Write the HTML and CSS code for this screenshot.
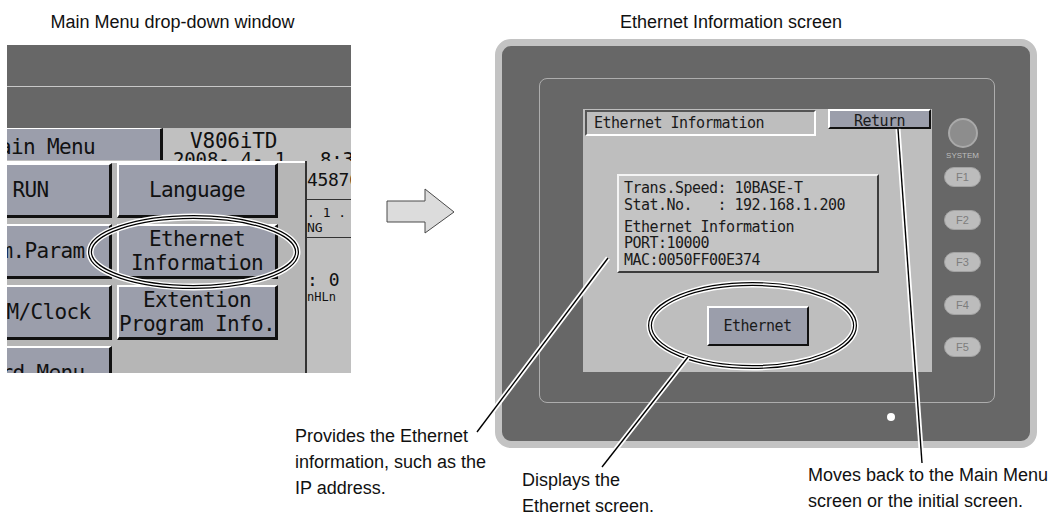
FILE: index.html
```html
<!DOCTYPE html>
<html lang="en">

<head>
    <meta charset="UTF-8">
    <meta name="viewport" content="width=device-width, initial-scale=1.0">
    <title>Ethernet Information</title>

    <link rel="stylesheet" href="styles.css">

</head>

<body>
    <div class="figure">
        <div class="top">
            <!-- Menu principal (ventana desplegable) -->
            <div class="col col-left">
                <div class="caption caption-left">Main Menu drop-down window</div>
                <div class="menu-shot">
                    <div class="menu-head"></div>
                    <div class="menu-screen">
                        <div class="menu-bar">
                            <div class="menu-title">Main Menu</div>
                            <div class="menu-model">
                                <div class="model-name">V806iTD</div>
                                <div class="model-date">2008- 4- 1   8:30</div>
                            </div>
                        </div>
                        <div class="menu-body">
                            <div class="menu-grid">
                                <div class="mbtn">RUN</div>
                                <div class="mbtn">Language</div>
                                <div class="mbtn">Comm.Param.</div>
                                <div class="mbtn">Ethernet<br>Information</div>
                                <div class="mbtn">SRAM/Clock</div>
                                <div class="mbtn">Extention<br>Program Info.</div>
                                <div class="mbtn">Card Menu</div>
                            </div>
                            <div class="menu-status">
                                <div class="st-count">45870</div>
                                <div class="st-ip"><span class="ln">. 1 .</span><span class="ln">NG</span></div>
                                <div class="st-clock">: 0</div>
                                <div class="st-small">nHLn</div>
                            </div>
                        </div>
                    </div>
                </div>
            </div>

            <!-- Flecha -->
            <svg class="arrow" width="70" height="46" viewBox="0 0 70 46">
                <polygon points="1,13 39,13 39,1 68,24 39,45 39,34 1,34" fill="#dcdcdc" stroke="#4a4a4a" stroke-width="1"/>
            </svg>

            <!-- Pantalla de informacion Ethernet -->
            <div class="col col-right">
                <div class="caption caption-right">Ethernet Information screen</div>
                <div class="device">
                    <div class="bezel">
                        <div class="screen">
                            <div class="scr-top">
                                <div class="scr-title">Ethernet Information</div>
                                <div class="scr-return">Return</div>
                            </div>
                            <div class="scr-info">
                                <div class="ln">Trans.Speed: 10BASE-T</div>
                                <div class="ln">Stat.No.   : 192.168.1.200</div>
                                <div class="ln info-gap">Ethernet Information</div>
                                <div class="ln">PORT:10000</div>
                                <div class="ln">MAC:0050FF00E374</div>
                            </div>
                            <div class="scr-btn">Ethernet</div>
                        </div>
                        <div class="keys">
                            <div class="sys"></div>
                            <div class="sys-label">SYSTEM</div>
                            <div class="fkey fkey-first">F1</div>
                            <div class="fkey">F2</div>
                            <div class="fkey">F3</div>
                            <div class="fkey">F4</div>
                            <div class="fkey">F5</div>
                        </div>
                    </div>
                    <div class="dot"></div>
                </div>
            </div>
        </div>

        <!-- Llamadas (elipses y lineas) -->
        <svg class="callouts" width="1063" height="515" viewBox="0 0 1063 515">
            <g fill="none">
                <ellipse cx="193.5" cy="252" rx="103.5" ry="35" stroke="#fff" stroke-width="7"/>
                <ellipse cx="193.5" cy="252" rx="103.5" ry="35" stroke="#000" stroke-width="4"/>
                <ellipse cx="193.5" cy="252" rx="103.5" ry="35" stroke="#fff" stroke-width="1.6"/>

                <ellipse cx="752.5" cy="325.5" rx="102.5" ry="41.5" stroke="#fff" stroke-width="7"/>
                <ellipse cx="752.5" cy="325.5" rx="102.5" ry="41.5" stroke="#000" stroke-width="4"/>
                <ellipse cx="752.5" cy="325.5" rx="102.5" ry="41.5" stroke="#fff" stroke-width="1.6"/>

                <line x1="608" y1="258" x2="477" y2="432" stroke="#fff" stroke-width="5"/>
                <line x1="608" y1="258" x2="477" y2="432" stroke="#000" stroke-width="1.4"/>
                <line x1="688" y1="357" x2="602" y2="467" stroke="#fff" stroke-width="5"/>
                <line x1="688" y1="357" x2="602" y2="467" stroke="#000" stroke-width="1.4"/>
                <line x1="898" y1="129" x2="922" y2="463" stroke="#fff" stroke-width="5"/>
                <line x1="898" y1="129" x2="922" y2="463" stroke="#000" stroke-width="1.4"/>
            </g>
        </svg>

        <div class="note note-ip">Provides the Ethernet<br>information, such as the<br>IP address.</div>
        <div class="note note-eth">Displays the<br>Ethernet screen.</div>
        <div class="note note-ret">Moves back to the Main Menu<br>screen or the initial screen.</div>
    </div>
</body>

</html>
```

FILE: styles.css
```css
body {
    margin: 0;
    font-family: "Liberation Sans", Arial, sans-serif;
    background-color: #fff;
    color: #111;
}

.figure {
    position: relative;
    width: 1063px;
    height: 515px;
    overflow: hidden;
}

.top {
    display: flex;
    align-items: flex-start;
}

.caption {
    font-size: 18px;
    line-height: 20px;
    padding-top: 12px;
    height: 20px;
    text-align: center;
    white-space: nowrap;
}

.caption-left {
    padding-right: 13px;
}

.caption-right {
    padding-right: 70px;
}

.ln {
    display: block;
    white-space: pre;
}

/* ---- menu principal ---- */

.col-left {
    margin-left: 7px;
    width: 344px;
}

.menu-shot {
    margin-top: 13px;
    width: 344px;
    height: 328px;
    overflow: hidden;
    font-family: "DejaVu Sans Mono", monospace;
}

.menu-head {
    height: 83px;
    background: linear-gradient(#676767 41px, #c8c8c8 41px, #c8c8c8 42px, #676767 42px);
}

.menu-screen {
    height: 245px;
    background-color: #c0c0c0;
}

.menu-bar {
    display: flex;
    height: 33px;
    overflow: hidden;
}

.menu-title {
    flex: none;
    box-sizing: border-box;
    margin-left: -57px;
    width: 213px;
    height: 32px;
    padding: 5px 0 0 37px;
    background-color: #9b9eab;
    border-top: 1px solid #fff;
    border-right: 3px solid #111;
    font-size: 21px;
    line-height: 26px;
    letter-spacing: -0.64px;
    white-space: nowrap;
}

.menu-model {
    flex: 1;
    padding: 3px 0 0 27px;
    overflow: hidden;
}

.model-name {
    font-size: 21px;
    line-height: 20px;
    letter-spacing: -0.2px;
    white-space: pre;
}

.model-date {
    margin-left: -17px;
    font-size: 19px;
    line-height: 16px;
    letter-spacing: -0.14px;
    white-space: pre;
}

.menu-body {
    display: flex;
    height: 212px;
}

.menu-grid {
    flex: none;
    margin-left: -57px;
    width: 355px;
    display: grid;
    grid-template-columns: 162px 161px;
    grid-auto-rows: 55px;
    column-gap: 5px;
    row-gap: 6px;
    align-content: start;
    background-color: #b6b6b6;
    border-top: 2px solid #fff;
}

.mbtn {
    box-sizing: border-box;
    display: flex;
    align-items: center;
    justify-content: center;
    text-align: center;
    background-color: #9b9eab;
    border-style: solid;
    border-width: 2px 3px 3px 2px;
    border-color: #fff #111 #111 #fff;
    font-size: 21px;
    line-height: 24px;
    letter-spacing: -0.64px;
    white-space: nowrap;
    overflow: hidden;
}

.menu-status {
    flex: none;
    width: 44px;
    border-left: 2px solid #333;
    background-color: #c0c0c0;
    overflow: hidden;
}

.st-count {
    box-sizing: border-box;
    height: 39px;
    padding-top: 9px;
    border-bottom: 1px solid #333;
    font-size: 18px;
    line-height: 20px;
    letter-spacing: -0.3px;
    white-space: pre;
}

.st-ip {
    box-sizing: border-box;
    height: 38px;
    padding-top: 5px;
    border-bottom: 1px solid #333;
    font-size: 13px;
    line-height: 15px;
}

.st-clock {
    padding-top: 32px;
    font-size: 18px;
    line-height: 20px;
    white-space: pre;
}

.st-small {
    font-size: 12px;
    line-height: 14px;
    white-space: pre;
}

/* ---- flecha ---- */

.arrow {
    flex: none;
    margin: 188px 0 0 35px;
}

/* ---- equipo ---- */

.col-right {
    margin-left: 39px;
    width: 542px;
}

.device {
    box-sizing: border-box;
    margin-top: 7px;
    width: 542px;
    height: 409px;
    border: 7px solid #c3c3c3;
    border-radius: 16px;
    background-color: #676767;
    overflow: hidden;
}

.bezel {
    box-sizing: border-box;
    display: flex;
    margin: 32px 0 0 37px;
    width: 456px;
    height: 325px;
    border: 1px solid #adadad;
    border-radius: 8px;
}

.screen {
    flex: none;
    margin: 30px 0 0 43px;
    width: 349px;
    height: 263px;
    background-color: #bebebe;
    font-family: "DejaVu Sans Mono", monospace;
    font-size: 15px;
    letter-spacing: -0.53px;
    color: #1a1a1a;
}

.scr-top {
    display: flex;
    align-items: flex-start;
    gap: 12px;
}

.scr-title {
    box-sizing: border-box;
    margin: 1px 0 0 2px;
    width: 231px;
    height: 26px;
    padding-left: 7px;
    border: 2px solid;
    border-color: #555 #fff #fff #555;
    line-height: 22px;
    white-space: pre;
}

.scr-return {
    box-sizing: border-box;
    width: 103px;
    height: 20px;
    padding-top: 3px;
    border: 2px solid;
    border-color: #fff #111 #111 #fff;
    background-color: #9b9eab;
    text-align: center;
    line-height: 14px;
}

.scr-info {
    box-sizing: border-box;
    margin: 38px 0 0 34px;
    width: 262px;
    height: 99px;
    padding: 4px 0 0 5px;
    border: 2px solid;
    border-color: #f4f4f4 #3c3c3c #3c3c3c #f4f4f4;
    background-color: #c4c4c4;
    line-height: 16.5px;
}

.info-gap {
    margin-top: 5.5px;
}

.scr-btn {
    box-sizing: border-box;
    display: flex;
    align-items: center;
    justify-content: center;
    margin: 33px auto 0;
    width: 102px;
    height: 40px;
    border: 2px solid;
    border-color: #fff #111 #111 #fff;
    background-color: #9b9eab;
}

.keys {
    flex: none;
    display: flex;
    flex-direction: column;
    align-items: center;
    margin: 39px 0 0 12px;
    width: 37px;
}

.sys {
    box-sizing: border-box;
    width: 30px;
    height: 30px;
    border-radius: 50%;
    background-color: #8d8d8d;
    border: 2px solid #a9a9a9;
}

.sys-label {
    margin-top: 2px;
    font-size: 8px;
    line-height: 11px;
    color: #bdbdbd;
}

.fkey {
    box-sizing: border-box;
    display: flex;
    align-items: center;
    justify-content: center;
    margin-top: 22.5px;
    width: 37px;
    height: 20px;
    border-radius: 10px;
    background-color: #bcbcbc;
    border: 1.5px solid #a2a2a2;
    font-size: 11px;
    color: #7d7d7d;
}

.fkey-first {
    margin-top: 6px;
}

.dot {
    margin: 10px 0 0 385px;
    width: 8px;
    height: 8px;
    border-radius: 50%;
    background-color: #fff;
}

/* ---- llamadas ---- */

.callouts {
    position: absolute;
    top: 0;
    left: 0;
    pointer-events: none;
}

.note {
    position: absolute;
    font-size: 18px;
    line-height: 26px;
    white-space: nowrap;
}

.note-ip {
    left: 295px;
    top: 423px;
}

.note-eth {
    left: 522px;
    top: 467px;
}

.note-ret {
    left: 808px;
    top: 462px;
}
```
